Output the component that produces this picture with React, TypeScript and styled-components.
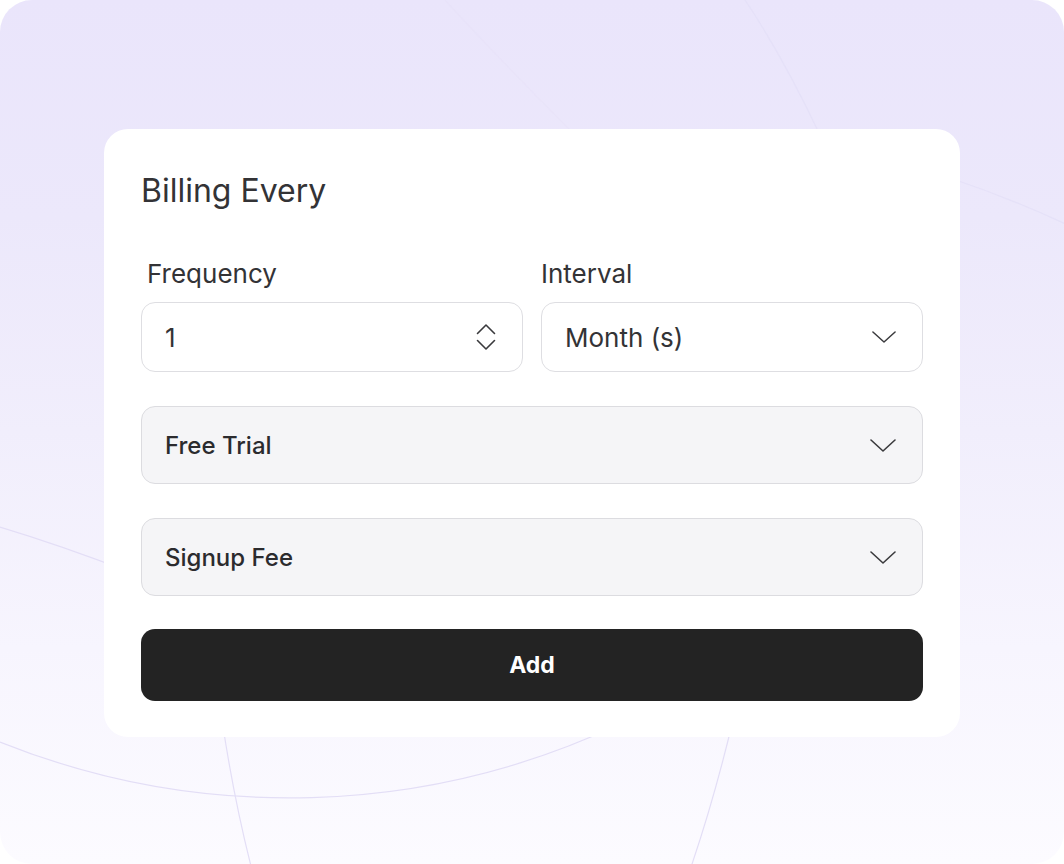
import React from 'react';
import styled, {createGlobalStyle} from 'styled-components';

const GlobalStyle = createGlobalStyle`
	html, body {
		margin: 0;
		padding: 0;
		background: #ffffff;
	}
	body {
		font-family: Inter, 'Noto Sans', 'Liberation Sans', sans-serif;
		-webkit-font-smoothing: antialiased;
	}
	* {
		box-sizing: border-box;
	}
`;

const ChevronDown = ({size = 24}: {size?: number}) => (
	<svg width={size} height={size / 2} viewBox="0 0 26 13" fill="none">
		<path
			d="M1 1 L13 12 L25 1"
			stroke="#3a3a3d"
			strokeWidth="1.6"
			strokeLinecap="round"
			strokeLinejoin="round"
		/>
	</svg>
);

const Stepper = () => (
	<svg width="20" height="28" viewBox="0 0 20 28" fill="none">
		<path
			d="M1.5 10.5 L10 2 L18.5 10.5"
			stroke="#3a3a3d"
			strokeWidth="1.6"
			strokeLinecap="round"
			strokeLinejoin="round"
		/>
		<path
			d="M1.5 17.5 L10 26 L18.5 17.5"
			stroke="#3a3a3d"
			strokeWidth="1.6"
			strokeLinecap="round"
			strokeLinejoin="round"
		/>
	</svg>
);

// faint decorative curves behind the card
const BackdropLines = () => (
	<Backdrop viewBox="0 0 1064 864" preserveAspectRatio="none">
		<g fill="none" stroke="#e3def6" strokeWidth="1.2">
			<path d="M 0 742 A 777 777 0 0 0 620 724" />
			<path d="M 0 527 Q 60 545 130 572" />
			<path d="M 222 720 Q 234 800 252 870" />
			<path d="M 733 720 Q 714 800 690 870" />
			<path d="M 745 0 Q 782 55 820 135" opacity="0.7" />
			<path d="M 950 178 Q 1010 198 1070 226" opacity="0.7" />
			<path d="M 445 0 Q 500 60 570 130" opacity="0.3" />
		</g>
	</Backdrop>
);

export default function App() {
	return (
		<>
			<GlobalStyle />
			<Frame>
				<BackdropLines />
				<Card>
					<Title>Billing Every</Title>
					<FieldGrid>
						<Field>
							<Label $indent={6}>Frequency</Label>
							<InputBox>
								<Value>1</Value>
								<IconSlot>
									<Stepper />
								</IconSlot>
							</InputBox>
						</Field>
						<Field>
							<Label $indent={0}>Interval</Label>
							<InputBox>
								<Value>Month (s)</Value>
								<IconSlot>
									<ChevronDown size={24} />
								</IconSlot>
							</InputBox>
						</Field>
					</FieldGrid>
					<Collapsible>
						<CollapsibleTitle>Free Trial</CollapsibleTitle>
						<ChevronDown size={26} />
					</Collapsible>
					<Collapsible>
						<CollapsibleTitle>Signup Fee</CollapsibleTitle>
						<ChevronDown size={26} />
					</Collapsible>
					<AddButton type="button">Add</AddButton>
				</Card>
			</Frame>
		</>
	);
}

const Frame = styled.div`
	position: relative;
	width: 1064px;
	height: 864px;
	border-radius: 32px;
	overflow: hidden;
	background: linear-gradient(
		180deg,
		#eae5fb 0%,
		#ece8fb 25%,
		#f1eefc 50%,
		#f7f5fe 75%,
		#fcfbff 100%
	);
	padding: 129px 104px 0;
`;

const Backdrop = styled.svg`
	position: absolute;
	inset: 0;
	width: 100%;
	height: 100%;
	pointer-events: none;
`;

const Card = styled.div`
	position: relative;
	z-index: 1;
	width: 856px;
	background: #ffffff;
	border-radius: 24px;
	padding: 43px 37px 36px;
	display: flex;
	flex-direction: column;
`;

const Title = styled.h2`
	margin: 0;
	font-size: 32px;
	line-height: 38px;
	font-weight: 400;
	color: #333336;
`;

const FieldGrid = styled.div`
	display: grid;
	grid-template-columns: 1fr 1fr;
	column-gap: 18px;
	margin-top: 49px;
`;

const Field = styled.div`
	display: flex;
	flex-direction: column;
	gap: 13px;
`;

const Label = styled.label<{$indent: number}>`
	padding-left: ${({$indent}) => $indent}px;
	font-size: 26px;
	line-height: 30px;
	font-weight: 400;
	color: #333336;
`;

const InputBox = styled.div`
	height: 70px;
	display: flex;
	align-items: center;
	justify-content: space-between;
	padding: 0 26px 0 23px;
	border: 1.5px solid #dedee2;
	border-radius: 14px;
	background: #ffffff;
`;

const Value = styled.span`
	font-size: 26px;
	color: #333336;
`;

const IconSlot = styled.span`
	display: flex;
	align-items: center;
	justify-content: center;
`;

const Collapsible = styled.div`
	height: 78px;
	margin-top: 34px;
	display: flex;
	align-items: center;
	justify-content: space-between;
	padding: 0 26px 0 23px;
	background: #f5f5f7;
	border: 1.5px solid #dcdce0;
	border-radius: 14px;
`;

const CollapsibleTitle = styled.span`
	font-size: 24px;
	font-weight: 500;
	color: #2b2b2e;
`;

const AddButton = styled.button`
	margin-top: 33px;
	height: 72px;
	width: 100%;
	border: none;
	border-radius: 14px;
	background: #232323;
	color: #ffffff;
	font-family: inherit;
	font-size: 23px;
	font-weight: 700;
	cursor: pointer;
`;
